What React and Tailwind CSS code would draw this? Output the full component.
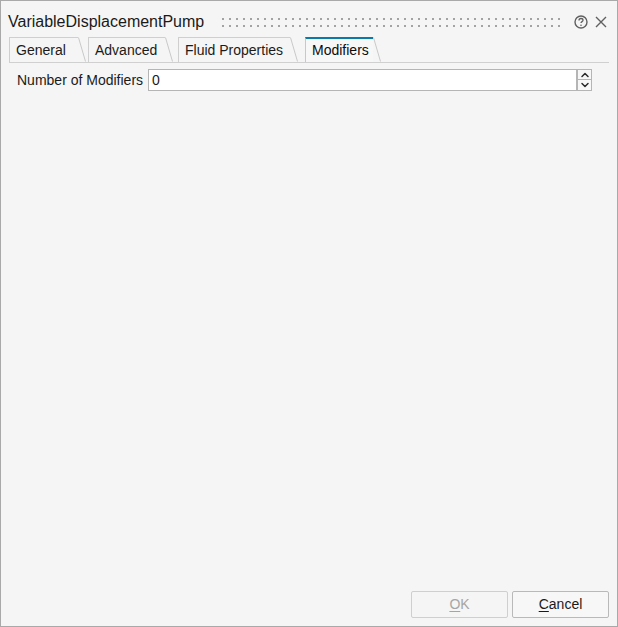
import { ChevronUp, ChevronDown } from "lucide-react";

const font = { fontFamily: '"Liberation Sans", Arial, sans-serif' };

function Tab({ label, active, width, gap = 0 }) {
  return (
    <div className="flex h-[25px] items-stretch" style={{ marginLeft: gap }}>
      <div
        className={`flex items-center border-l border-t pl-[6px] text-[14px] ${
          active
            ? "border-l-[#c8c8c8] border-t-[2px] border-t-[#0a7aa6] bg-[#f7f7f7] text-[#0b0b0b]"
            : "border-[#cfcfcf] text-[#1b1b1b]"
        }`}
        style={{ width }}
      >
        {label}
      </div>
      <svg width="8" height="25" className="block">
        <line x1="0.5" y1="0.5" x2="7.5" y2="24.5" stroke="#c8c8c8" strokeWidth="1" />
      </svg>
    </div>
  );
}

function Grip() {
  return (
    <div className="grid grid-cols-[repeat(49,7px)] gap-y-[5px]">
      {Array.from({ length: 98 }).map((_, i) => (
        <span key={i} className="block h-[2px] w-[2px] bg-[#a3a3a3]" />
      ))}
    </div>
  );
}

export default function App() {
  return (
    <div
      className="flex h-[627px] w-[618px] flex-col border border-[#a9a9a9] bg-[#f5f5f5] text-[#1a1a1a]"
      style={font}
    >
      {/* title bar */}
      <div className="flex h-[36px] items-center pl-[7px] pr-[10px] pt-[6px]">
        <span className="text-[16px] text-[#1a1a1a]">VariableDisplacementPump</span>
        <div className="ml-[18px] flex-1 pt-[1px]">
          <Grip />
        </div>
        <div className="ml-[8px] flex items-center gap-[7px]">
          <svg width="14" height="14" viewBox="0 0 14 14">
            <circle cx="7" cy="7" r="6" fill="none" stroke="#606060" strokeWidth="1.4" />
            <path
              d="M5 5.4c0-1.2.9-1.9 2-1.9s2 .7 2 1.7c0 1.4-2 1.4-2 2.8"
              fill="none"
              stroke="#606060"
              strokeWidth="1.3"
            />
            <circle cx="7" cy="10.2" r="0.8" fill="#606060" />
          </svg>
          <svg width="12" height="12" viewBox="0 0 12 12">
            <path d="M1 1L11 11M11 1L1 11" stroke="#606060" strokeWidth="1.4" />
          </svg>
        </div>
      </div>

      {/* tabs */}
      <div className="mx-[8px] flex items-end border-b border-[#d0d0d0]">
        <Tab label="General" width={69} />
        <Tab label="Advanced" width={77} gap={2} />
        <Tab label="Fluid Properties" width={112} gap={5} />
        <Tab label="Modifiers" active width={68} gap={7} />
      </div>

      {/* content */}
      <div className="flex flex-1 flex-col pl-[16px] pr-[25px] pt-[6px]">
        <div className="flex items-center">
          <span className="w-[131px] whitespace-nowrap text-[14px]">Number of Modifiers</span>
          <div className="flex h-[22px] flex-1 items-center border border-[#b5b5b5] bg-white pl-[3px] text-[14px]">
            0
          </div>
          <div className="flex h-[22px] w-[15px] flex-col">
            <div className="flex h-[11px] items-center justify-center border border-[#b5b5b5] bg-[#f7f7f7]">
              <ChevronUp size={12} strokeWidth={3} color="#2a2a2a" />
            </div>
            <div className="flex h-[11px] items-center justify-center border border-t-0 border-[#b5b5b5] bg-[#f7f7f7]">
              <ChevronDown size={12} strokeWidth={3} color="#2a2a2a" />
            </div>
          </div>
        </div>
      </div>

      {/* footer */}
      <div className="flex justify-end gap-[4px] pb-[8px] pr-[8px]">
        <button className="h-[27px] w-[97px] rounded-[2px] border border-[#cfcfcf] bg-[#f5f5f5] text-[14px] text-[#a5a5a5]">
          <span className="underline underline-offset-2">O</span>K
        </button>
        <button className="h-[27px] w-[97px] rounded-[2px] border border-[#b9b9b9] bg-[#f7f7f7] text-[14px] text-[#1a1a1a]">
          <span className="underline underline-offset-2">C</span>ancel
        </button>
      </div>
    </div>
  );
}
